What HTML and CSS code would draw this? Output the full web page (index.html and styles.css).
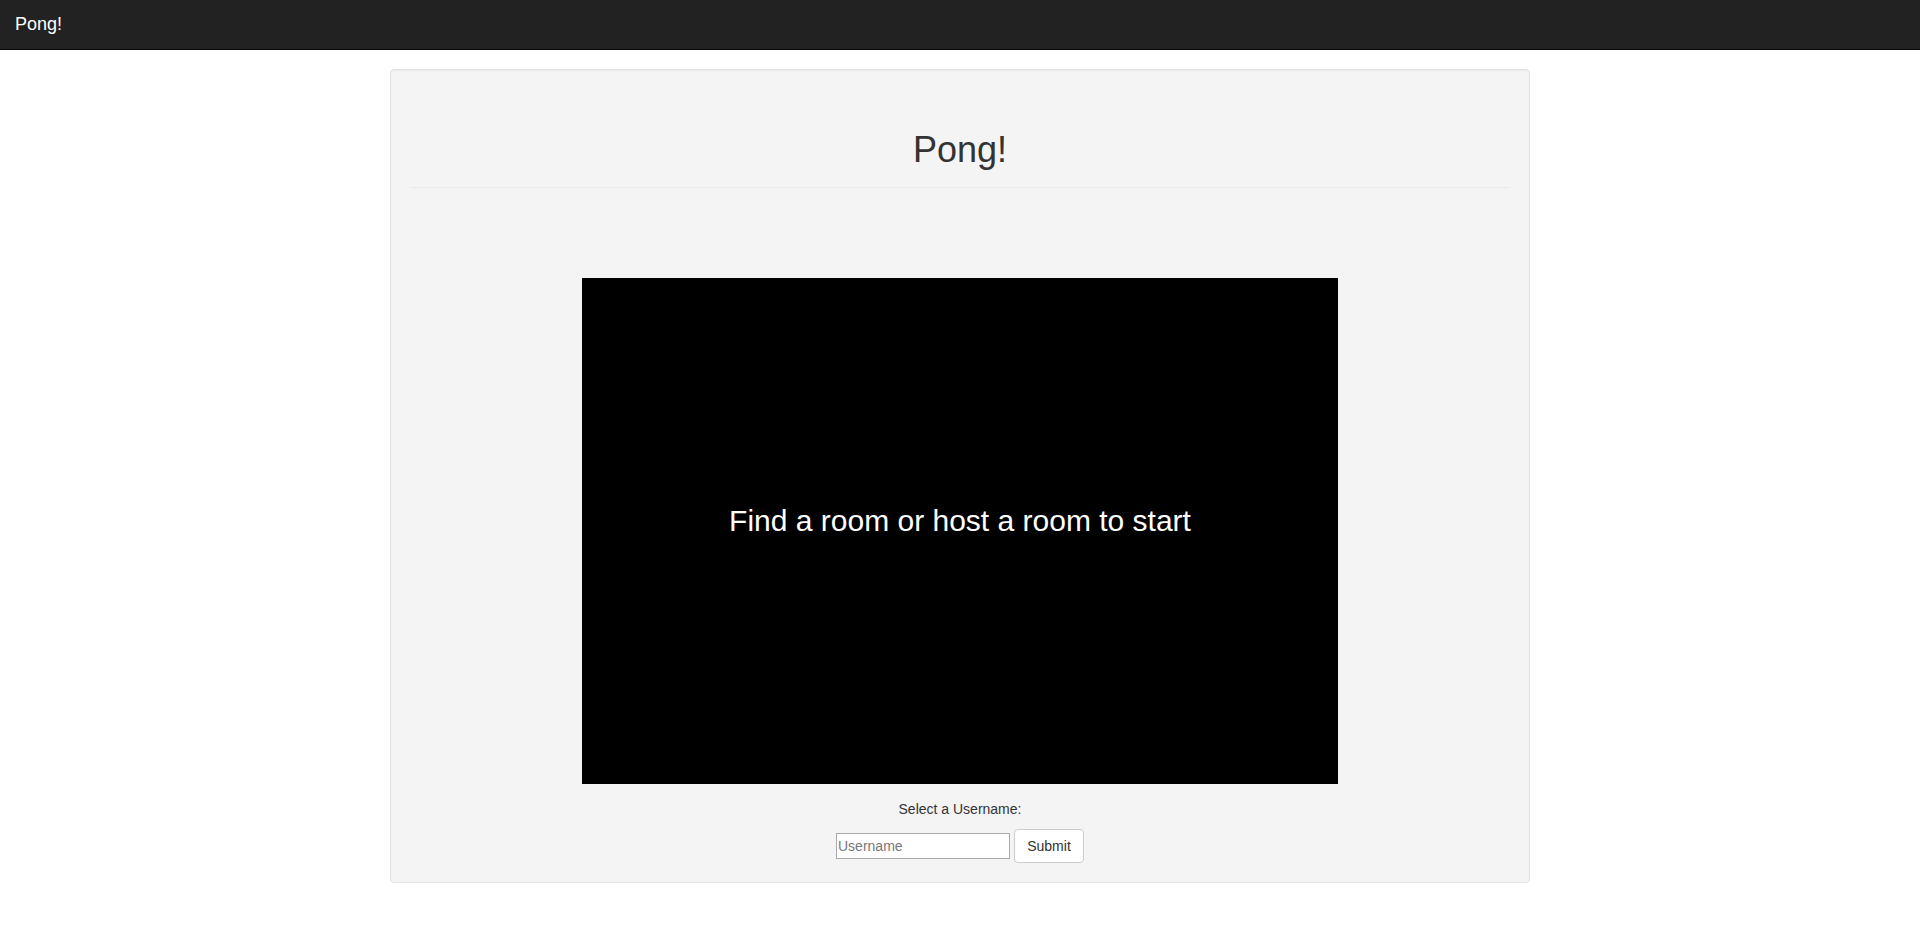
FILE: index.html
```html
<!DOCTYPE html>
<html>
<head>
<meta charset="utf-8">
<title>Pong!</title>
<link rel="stylesheet" href="styles.css">
</head>
<body>
<nav class="navbar">
  <a class="brand" href="#">Pong!</a>
</nav>
<main class="container">
  <div class="well">
    <div class="page-header"><h1>Pong!</h1></div>
    <div class="game-wrap">
      <div class="game">
        <span class="game-msg">Find a room or host a room to start</span>
      </div>
    </div>
    <div class="user-form">
      <label class="user-label" for="username">Select a Username:</label>
      <div class="user-row">
        <input id="username" class="user-input" type="text" placeholder="Username">
        <button class="btn" type="button">Submit</button>
      </div>
    </div>
  </div>
</main>
</body>
</html>
```
FILE: styles.css
```css
* { box-sizing: border-box; }
html, body { margin: 0; padding: 0; }
body {
  font-family: "Liberation Sans", Arial, Helvetica, sans-serif;
  font-size: 14px;
  line-height: 20px;
  color: #333;
  background: #fff;
}
.navbar {
  height: 50px;
  background: #222;
  border-bottom: 1px solid #080808;
  display: flex;
  align-items: flex-start;
}
.brand {
  padding: 15px 15px;
  font-size: 18px;
  line-height: 19px;
  color: #fff;
  text-decoration: none;
}
.container {
  width: 1140px;
  margin: 19px auto 0;
}
.well {
  background: #f4f4f4;
  border: 1px solid #e3e3e3;
  border-radius: 4px;
  padding: 19px 19px 18px;
  box-shadow: inset 0 1px 1px rgba(0,0,0,0.05);
  min-height: 814px;
}
.page-header {
  border-bottom: 1px solid #eaeaea;
  padding-top: 41px;
  padding-bottom: 17px;
}
.page-header h1 {
  margin: 0;
  font-size: 36px;
  font-weight: 500;
  line-height: 40px;
  text-align: center;
  color: #333;
}
.game-wrap {
  display: flex;
  justify-content: center;
  padding-top: 90px;
}
.game {
  width: 756px;
  height: 506px;
  background: #000;
  display: flex;
  align-items: center;
  justify-content: center;
  padding-bottom: 21px;
}
.game-msg {
  color: #fff;
  font-size: 30px;
  line-height: 30px;
}
.user-form {
  display: flex;
  flex-direction: column;
  align-items: center;
  padding-top: 15px;
}
.user-label {
  display: block;
  line-height: 20px;
  margin-bottom: 10px;
}
.user-row {
  display: flex;
  align-items: center;
  gap: 4px;
}
.user-input {
  width: 174px;
  height: 26px;
  border: 1px solid #a9a9a9;
  padding: 1px 1px;
  font-family: "Liberation Sans", Arial, sans-serif;
  font-size: 14px;
  color: #333;
  background: #fff;
  border-radius: 0;
  margin: 0;
}
.user-input::placeholder { color: #777; }
.btn {
  height: 34px;
  width: 70px;
  padding: 6px 12px;
  font-family: "Liberation Sans", Arial, sans-serif;
  font-size: 14px;
  line-height: 20px;
  color: #333;
  background: #fff;
  border: 1px solid #ccc;
  border-radius: 4px;
}
```
